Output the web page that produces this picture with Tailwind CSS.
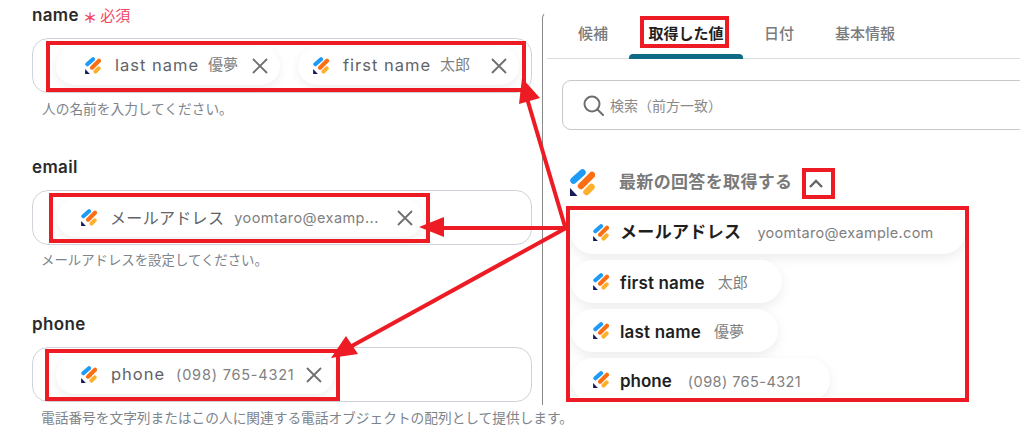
<!DOCTYPE html>
<html lang="ja">
<head>
<meta charset="UTF-8">
<title>取得した値</title>
<script src="https://cdn.jsdelivr.net/npm/@tailwindcss/browser@4"></script>
</head>
<body class="bg-white">
<svg class="hidden">
  <symbol id="logo" viewBox="0 0 25 27">
    <path d="M3.5 11.5L12.5 3.5" stroke="#1d9bf6" stroke-width="6.5" stroke-linecap="round"/>
    <path d="M11 17L22 6" stroke="#fb6f14" stroke-width="6.5" stroke-linecap="round"/>
    <path d="M16.5 23L21.5 18" stroke="#fdb02c" stroke-width="6.5" stroke-linecap="round"/>
    <path d="M0 19L7.5 27H0Z" fill="#14195a"/>
  </symbol>
  <symbol id="close" viewBox="0 0 16 16">
    <path d="M1 1L15 15M15 1L1 15" stroke="#6f6f6f" stroke-width="1.8" fill="none"/>
  </symbol>
</svg>

<div class="relative flex w-[1020px] h-[441px] overflow-hidden bg-white font-['Inter','Noto_Sans_CJK_JP',sans-serif]">

  <!-- left form -->
  <div class="w-[542px] shrink-0 pl-[32px] pt-[4px]">
    <div class="flex items-center h-[22px] pt-[2px] text-[17px] font-semibold text-[#2a2a2a] tracking-[0.02em]">name<span class="ml-[4px] mt-[4px] text-[#f2475e] text-[14px] font-bold leading-none">＊</span><span class="ml-[3px] text-[#f2475e] text-[15px] font-normal tracking-normal">必須</span></div>
    <div class="mt-[12px] w-[500px] h-[55px] rounded-[16px] border border-[#d0d3da] flex items-center pl-[23px] gap-[18px]">
      <div class="flex items-center h-[38px] w-[224px] rounded-full bg-white shadow-[0_3px_10px_rgba(0,0,0,0.07)] pl-[29px]">
        <svg class="w-[16px] h-[17px] shrink-0"><use href="#logo"/></svg>
        <span class="ml-[14px] text-[16.5px] tracking-[0.06em] text-[#5f6368]">last name</span>
        <span class="ml-[9px] text-[15px] text-[#808080]">優夢</span>
        <svg class="ml-auto mr-[12px] w-[16px] h-[16px] shrink-0"><use href="#close"/></svg>
      </div>
      <div class="flex items-center h-[38px] w-[221px] rounded-full bg-white shadow-[0_3px_10px_rgba(0,0,0,0.07)] pl-[15px]">
        <svg class="w-[16px] h-[17px] shrink-0"><use href="#logo"/></svg>
        <span class="ml-[14px] text-[16.5px] tracking-[0.06em] text-[#5f6368]">first name</span>
        <span class="ml-[9px] text-[15px] text-[#808080]">太郎</span>
        <svg class="ml-auto mr-[12px] w-[16px] h-[16px] shrink-0"><use href="#close"/></svg>
      </div>
    </div>
    <p class="mt-[6px] ml-[10px] text-[13.7px] leading-[20px] text-[#7d848c]">人の名前を入力してください。</p>

    <div class="mt-[37px] flex items-center h-[22px] pt-[2px] text-[17px] font-semibold text-[#2a2a2a] tracking-[0.02em]">email</div>
    <div class="mt-[12px] w-[500px] h-[55px] rounded-[16px] border border-[#d0d3da] flex items-center pl-[24px]">
      <div class="flex items-center h-[38px] w-[366px] rounded-full bg-white shadow-[0_3px_10px_rgba(0,0,0,0.07)] pl-[24px]">
        <svg class="w-[16px] h-[17px] shrink-0"><use href="#logo"/></svg>
        <span class="ml-[13px] text-[16px] tracking-[0.02em] text-[#5f6368]">メールアドレス</span>
        <span class="ml-[10px] text-[14.5px] tracking-[0.03em] text-[#808080] whitespace-nowrap">yoomtaro@examp...</span>
        <svg class="ml-auto mr-[10px] w-[16px] h-[16px] shrink-0"><use href="#close"/></svg>
      </div>
    </div>
    <p class="mt-[5px] ml-[9px] text-[13.4px] leading-[20px] text-[#7d848c]">メールアドレスを設定してください。</p>

    <div class="mt-[43px] flex items-center h-[22px] pt-[2px] text-[17px] font-semibold text-[#2a2a2a] tracking-[0.02em]">phone</div>
    <div class="mt-[12px] w-[500px] h-[55px] rounded-[16px] border border-[#d0d3da] flex items-center pl-[23px]">
      <div class="flex items-center h-[38px] w-[278px] rounded-full bg-white shadow-[0_3px_10px_rgba(0,0,0,0.07)] pl-[25px]">
        <svg class="w-[16px] h-[17px] shrink-0"><use href="#logo"/></svg>
        <span class="ml-[14px] text-[16.5px] tracking-[0.06em] text-[#5f6368]">phone</span>
        <span class="ml-[11px] text-[14.5px] tracking-[0.055em] text-[#808080]">(098) 765-4321</span>
        <svg class="ml-auto mr-[12px] w-[16px] h-[16px] shrink-0"><use href="#close"/></svg>
      </div>
    </div>
    <p class="mt-[6px] ml-[9px] whitespace-nowrap text-[13.7px] leading-[20px] text-[#7d848c]">電話番号を文字列またはこの人に関連する電話オブジェクトの配列として提供します。</p>
  </div>

  <!-- right panel -->
  <div class="relative flex-1 mt-[12px] h-[393px] border-l border-t border-[#8a8a8a] rounded-tl-[6px] border-t-transparent">
    <div class="flex h-[46px] ml-[4px] border-b border-[#dcdcdc] text-[15px] leading-[22px] font-medium text-[#7a7a7a]">
      <div class="ml-[31px] pt-[10px]">候補</div>
      <div class="relative ml-[21px] w-[114px] pt-[10px] text-center text-[#1f1f1f] font-semibold">取得した値
        <div class="absolute left-0 right-0 bottom-[-1px] h-[5px] rounded-t-[4px] bg-[#0e6a85]"></div>
      </div>
      <div class="ml-[21px] pt-[10px]">日付</div>
      <div class="ml-[41px] pt-[10px]">基本情報</div>
    </div>
    <div class="ml-[19px] mt-[21px] w-[520px] h-[50px] rounded-[9px] border border-[#c8c8c8] flex items-center pl-[20px]">
      <svg class="w-[21px] h-[21px] shrink-0" viewBox="0 0 21 21" fill="none" stroke="#6f6f6f" stroke-width="2"><circle cx="9" cy="9" r="7.5"/><path d="M14.5 14.5L20 20" stroke-linecap="round"/></svg>
      <span class="ml-[6px] text-[14px] text-[#8a8a8a]">検索（前方一致）</span>
    </div>
    <div class="flex items-center ml-[27px] mt-[38px] h-[28px]">
      <svg class="w-[25px] h-[27px] shrink-0"><use href="#logo"/></svg>
      <span class="ml-[24px] mt-[2px] text-[17px] tracking-[0.02em] font-semibold text-[#7a7a7a]">最新の回答を取得する</span>
      <svg class="ml-[17px] mt-[2px] w-[14px] h-[9px]" viewBox="0 0 14 9" fill="none" stroke="#666" stroke-width="2.4"><path d="M1 8L7 2L13 8"/></svg>
    </div>
    <div class="flex flex-col items-start gap-[6px] ml-[28px] mt-[15px] h-[186px] overflow-hidden pb-[6px]">
      <div class="flex items-center shrink-0 h-[43px] w-[394px] rounded-full bg-white shadow-[0_4px_12px_rgba(0,0,0,0.08)] pl-[22px]">
        <svg class="w-[16px] h-[17px] shrink-0"><use href="#logo"/></svg>
        <span class="ml-[11px] text-[17px] tracking-[0.02em] font-semibold text-[#1f1f1f]">メールアドレス</span>
        <span class="ml-[16px] text-[14.5px] tracking-[0.02em] text-[#808080]">yoomtaro@example.com</span>
      </div>
      <div class="flex items-center shrink-0 h-[43px] w-[211px] rounded-full bg-white shadow-[0_4px_12px_rgba(0,0,0,0.08)] pl-[22px]">
        <svg class="w-[16px] h-[17px] shrink-0"><use href="#logo"/></svg>
        <span class="ml-[11px] mt-[4px] text-[17px] tracking-[0.01em] font-semibold text-[#1f1f1f]">first name</span>
        <span class="ml-[13px] mt-[4px] text-[15px] text-[#808080]">太郎</span>
      </div>
      <div class="flex items-center shrink-0 h-[43px] w-[207px] rounded-full bg-white shadow-[0_4px_12px_rgba(0,0,0,0.08)] pl-[22px]">
        <svg class="w-[16px] h-[17px] shrink-0"><use href="#logo"/></svg>
        <span class="ml-[11px] mt-[4px] text-[17px] tracking-[0.01em] font-semibold text-[#1f1f1f]">last name</span>
        <span class="ml-[13px] mt-[4px] text-[15px] text-[#808080]">優夢</span>
      </div>
      <div class="flex items-center shrink-0 h-[43px] w-[259px] rounded-full bg-white shadow-[0_4px_12px_rgba(0,0,0,0.08)] pl-[22px]">
        <svg class="w-[16px] h-[17px] shrink-0"><use href="#logo"/></svg>
        <span class="ml-[11px] mt-[4px] text-[17px] font-semibold text-[#1f1f1f]">phone</span>
        <span class="ml-[16px] mt-[4px] text-[14.5px] tracking-[0.03em] text-[#808080]">(098) 765-4321</span>
      </div>
    </div>
  </div>

  <!-- red annotations drawn over the screenshot -->
  <svg class="absolute left-0 top-0 pointer-events-none" width="1020" height="441" fill="none" stroke="#ed1c24" stroke-width="4">
    <rect x="48" y="43" width="476" height="47"/>
    <rect x="51" y="195" width="377" height="46"/>
    <rect x="47" y="351" width="291" height="48"/>
    <rect x="642" y="18" width="85" height="28"/>
    <rect x="804" y="170" width="29" height="27"/>
    <rect x="568" y="208" width="399" height="192"/>
    <path d="M566 230L526 95"/>
    <path d="M566 228H440"/>
    <path d="M566 228L350 347"/>
    <path d="M522 78L519 104L540 98Z" fill="#ed1c24" stroke="none"/>
    <path d="M419 227L444 217V237Z" fill="#ed1c24" stroke="none"/>
    <path d="M331 358L346 336L358 354Z" fill="#ed1c24" stroke="none"/>
  </svg>
</div>
</body>
</html>
